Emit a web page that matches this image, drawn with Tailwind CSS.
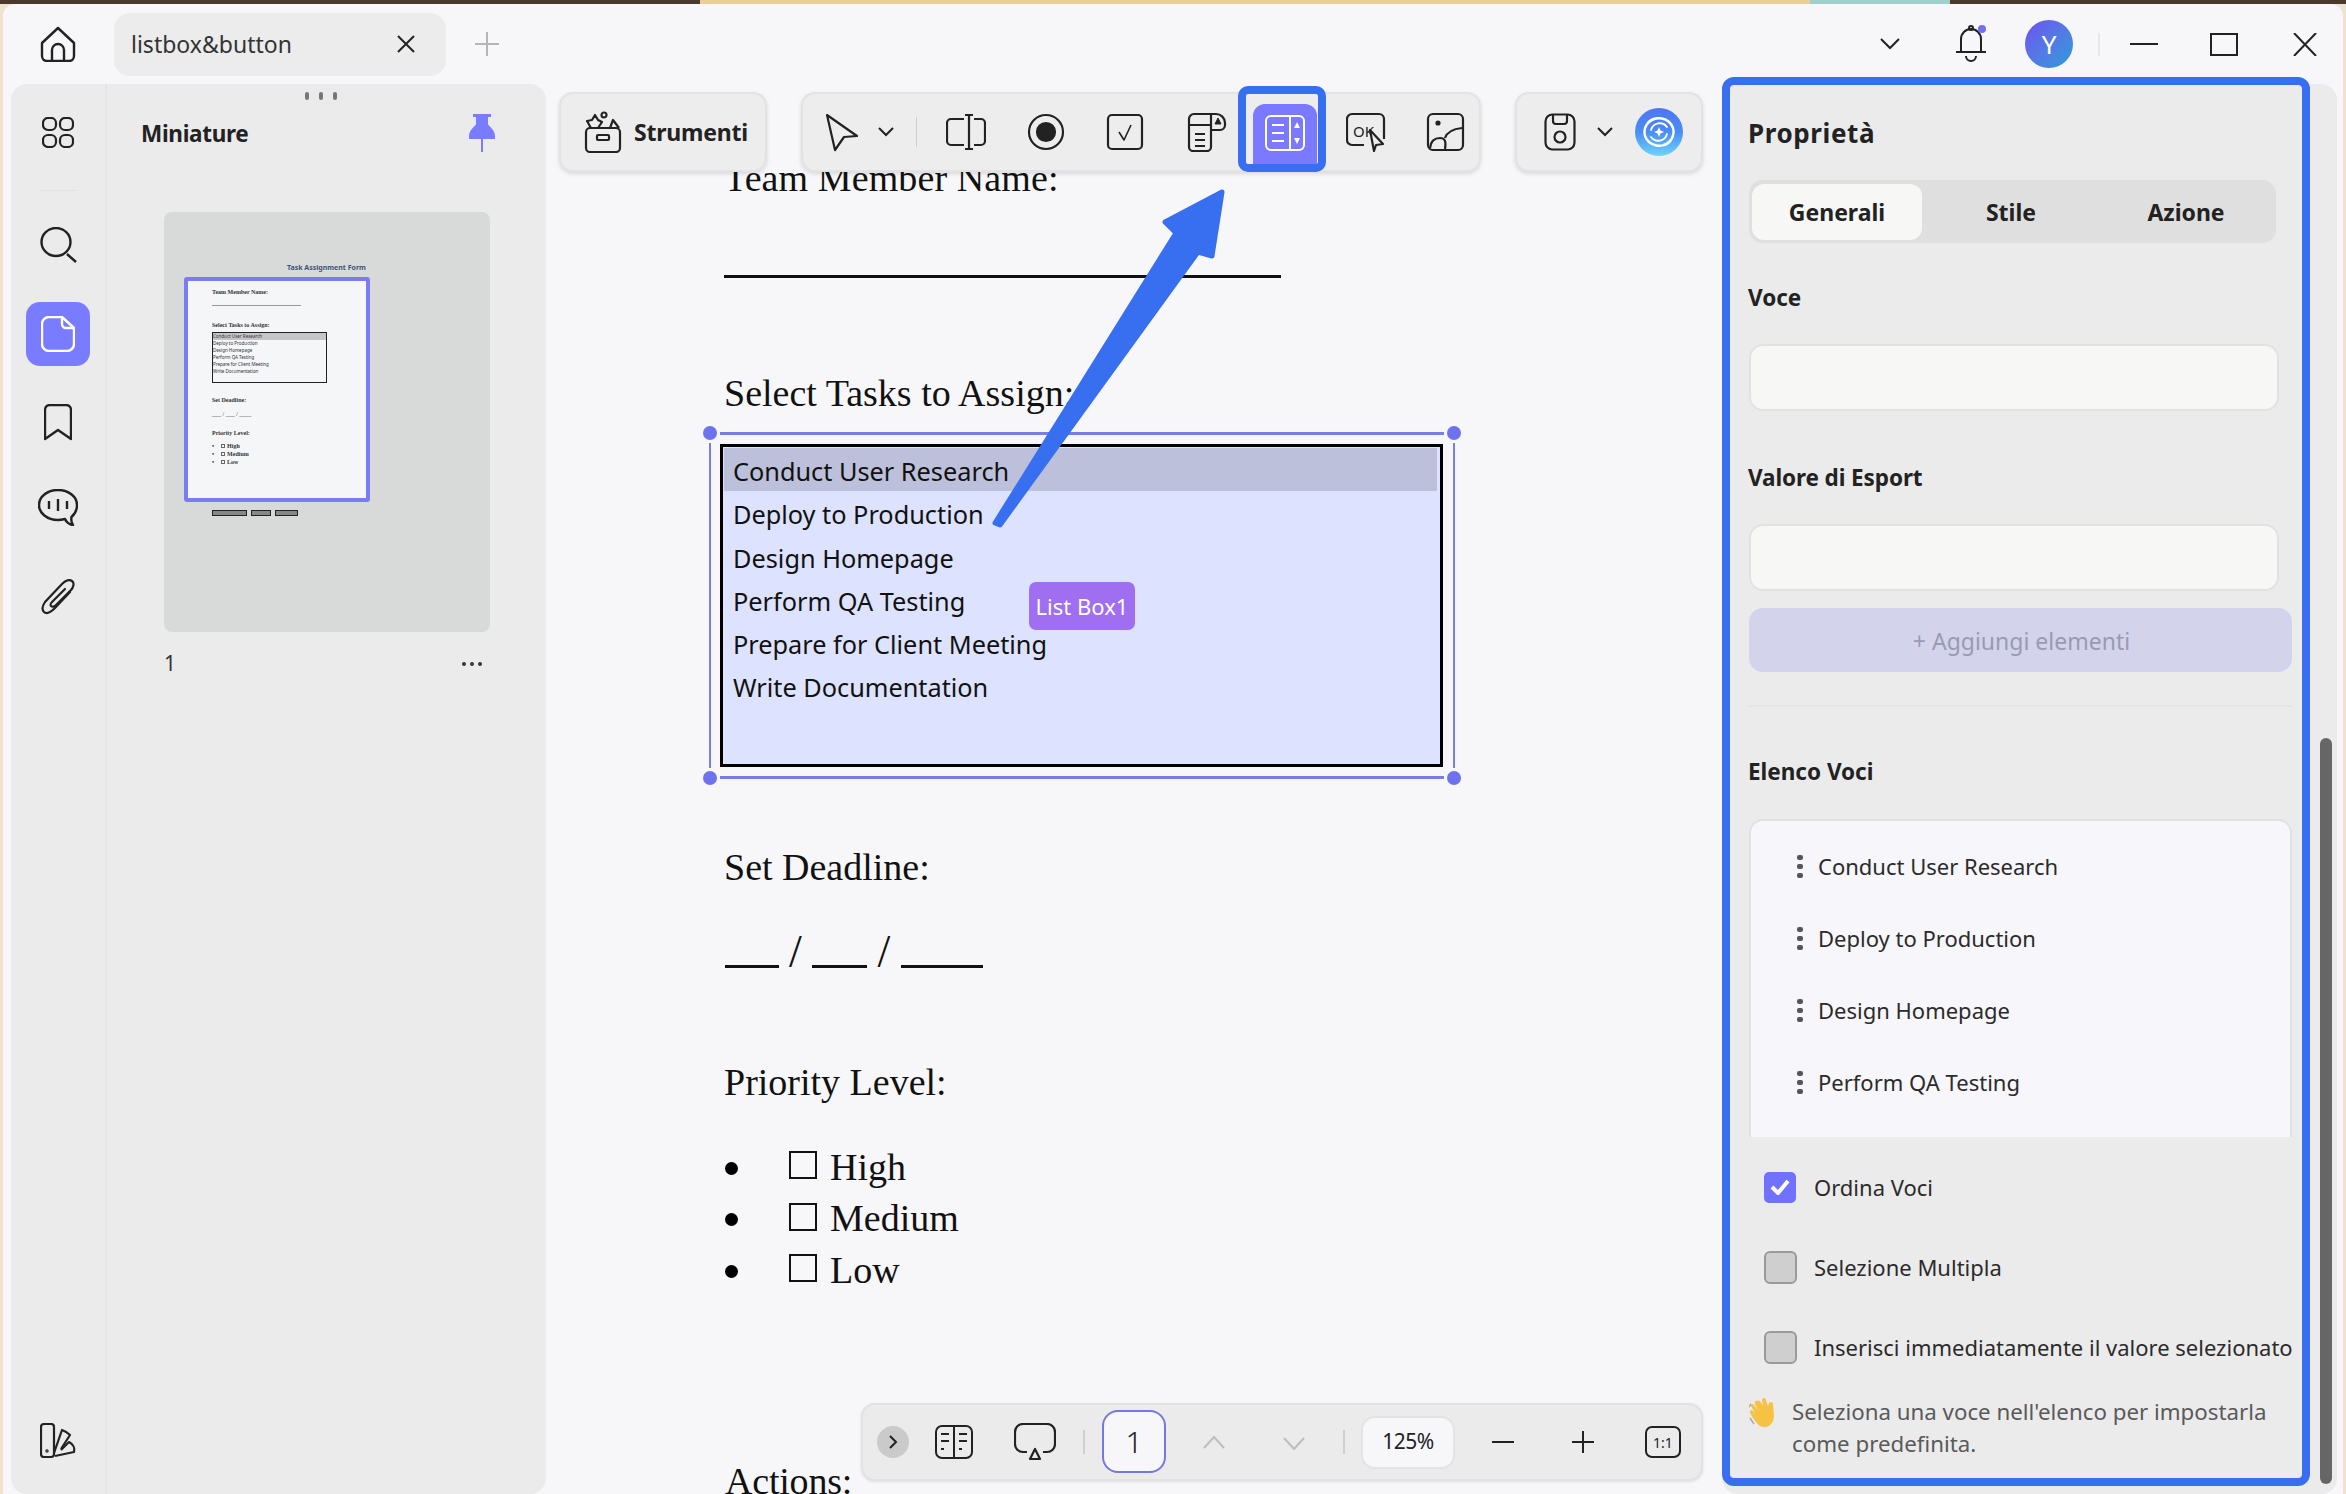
<!DOCTYPE html>
<html lang="it">
<head>
  <meta charset="UTF-8" />
  <title>listbox&amp;button</title>
  <script src="https://cdn.jsdelivr.net/npm/@tailwindcss/browser@4"></script>
</head>
<body class="bg-[#efe3d0] [font-family:'Noto_Sans',sans-serif] text-[#222]">
<div class="w-[2346px] h-[1494px] overflow-hidden flex flex-col">
  <!-- wallpaper strip -->
  <div class="h-[4px] flex shrink-0">
    <div class="w-[700px] bg-[#4a392d]"></div>
    <div class="w-[1110px] bg-[#e8cf98]"></div>
    <div class="w-[140px] bg-[#a0d0cc]"></div>
    <div class="flex-1 bg-[#4a392d]"></div>
  </div>

  <div class="ml-[3px] w-[2340px] h-[1490px] bg-[#f7f7f9] rounded-t-[12px] flex flex-col overflow-hidden">
    <!-- title bar -->
    <div class="h-[80px] shrink-0 flex items-center">
      <svg class="ml-[37px] w-[36px] h-[36px]" viewBox="0 0 36 36" fill="none" stroke="#222" stroke-width="2.4" stroke-linejoin="round"><path d="M2 17 18 2l16 15v13a5 5 0 0 1-5 5H7a5 5 0 0 1-5-5z"/><path d="M12 35V24a6 6 0 0 1 12 0v11"/></svg>
      <div class="ml-[38px] w-[332px] h-[63px] rounded-[16px] bg-[#ececed] flex items-center pl-[17px] pr-[31px] justify-between">
        <span class="text-[23px] text-[#333]">listbox&amp;button</span>
        <svg class="w-[18px] h-[18px]" viewBox="0 0 18 18" stroke="#222" stroke-width="2"><path d="M1 1l16 16M17 1 1 17"/></svg>
      </div>
      <svg class="ml-[29px] w-[24px] h-[24px]" viewBox="0 0 24 24" stroke="#b5b5b5" stroke-width="2"><path d="M12 0v24M0 12h24"/></svg>

      <svg class="ml-[1381px] w-[20px] h-[12px]" viewBox="0 0 20 12" fill="none" stroke="#222" stroke-width="2"><path d="M1 1l9 9 9-9"/></svg>
      <div class="ml-[56px] relative w-[30px] h-[38px]">
        <svg class="w-[30px] h-[38px]" viewBox="0 0 30 38" fill="none" stroke="#222" stroke-width="2"><path d="M5 26V14a10 10 0 0 1 20 0v12"/><path d="M0 27h30"/><path d="M10 31a5 5 0 0 0 10 0"/><circle cx="15" cy="3" r="2"/></svg>
        <div class="absolute -top-[0px] right-[0px] w-[8px] h-[8px] rounded-full bg-[#6f70f5]"></div>
      </div>
      <div class="ml-[39px] w-[48px] h-[48px] rounded-full bg-linear-to-br from-[#6a4ff0] to-[#1e9bd8] text-white text-[26px] flex items-center justify-center">Y</div>
      <div class="ml-[25px] w-[2px] h-[23px] bg-[#e8e8e8]"></div>
      <div class="ml-[30px] w-[28px] h-[2px] bg-[#222]"></div>
      <div class="ml-[52px] w-[28px] h-[23px] border-2 border-[#222]"></div>
      <svg class="ml-[55px] w-[24px] h-[23px]" viewBox="0 0 24 23" stroke="#222" stroke-width="2"><path d="M1 0l22 23M23 0 1 23"/></svg>
    </div>

    <!-- main -->
    <div class="flex-1 flex pl-[8px] min-h-0">
      <!-- left panel -->
      <div class="w-[535px] shrink-0 bg-[#ebebec] rounded-[16px] flex">
        <div class="w-[96px] border-r-2 border-[#e5e5e6] flex flex-col items-center pt-[33px] pb-[36px]">
          <svg class="w-[32px] h-[31px]" viewBox="0 0 32 31" fill="none" stroke="#222" stroke-width="2.2"><rect x="1" y="1" width="13" height="12" rx="5"/><rect x="18" y="1" width="13" height="12" rx="5"/><rect x="1" y="18" width="13" height="12" rx="5"/><rect x="18" y="18" width="13" height="12" rx="5"/></svg>
          <div class="mt-[42px] w-[36px] h-[1px] bg-[#e2e2e2]"></div>
          <svg class="mt-[36px] w-[37px] h-[36px]" viewBox="0 0 37 36" fill="none" stroke="#222" stroke-width="2.4"><ellipse cx="16" cy="15" rx="14.5" ry="14"/><path d="M27 27l9 8"/></svg>
          <div class="mt-[39px] w-[64px] h-[64px] rounded-[14px] bg-[#7a7cff] flex items-center justify-center">
            <svg class="w-[34px] h-[36px]" viewBox="0 0 34 36" fill="none" stroke="#fff" stroke-width="2.4" stroke-linejoin="round"><path d="M21 1H8a7 7 0 0 0-7 7v20a7 7 0 0 0 7 7h18a7 7 0 0 0 7-7V12z"/><path d="M21 1v7a4 4 0 0 0 4 4h8"/></svg>
          </div>
          <svg class="mt-[38px] w-[28px] h-[37px]" viewBox="0 0 28 37" fill="none" stroke="#222" stroke-width="2.4" stroke-linejoin="round"><path d="M1 6a5 5 0 0 1 5-5h16a5 5 0 0 1 5 5v29l-13-9-13 9z"/></svg>
          <svg class="mt-[48px] w-[40px] h-[37px]" viewBox="0 0 40 37" fill="none" stroke="#222" stroke-width="2.4" stroke-linejoin="round"><path d="M20 1C9 1 1 8 1 16s8 15 19 15c3 0 5-.5 7-1 1 3 5 6 8 6-1.500-2-2-5-1.500-8C37 25 39 21 39 16 39 8 31 1 20 1z"/><path d="M11 12v8M20 10v12M29 12v8"/></svg>
          <svg class="mt-[53px] w-[34px] h-[37px]" viewBox="0 0 34 37" fill="none" stroke="#222" stroke-width="2.2" stroke-linecap="round"><path d="M29 13 14 29c-3 3-8 7-11 4s-1-7 1-10L21 5c3-3 7-5 10-3s1 7-1 9L15 26c-2 2-4 2-5 1s0-3 1-4L24 10"/></svg>
          <svg class="mt-auto w-[36px] h-[35px]" viewBox="0 0 36 35" fill="none" stroke="#222" stroke-width="2.2" stroke-linejoin="round"><rect x="1" y="1" width="13" height="33" rx="3"/><path d="M14 30 22 7c3 1 6 3 8 5l-9 14"/><path d="M15 33l19-4c1-4-1-8-5-10l-8 8"/><circle cx="7" cy="28" r=".6"/></svg>
        </div>
        <div class="flex-1 relative pl-[34px] pr-[43px]">
          <div class="absolute left-[198px] top-[8px] flex gap-[10px]">
            <div class="w-[4px] h-[8px] rounded-full bg-[#777]"></div>
            <div class="w-[4px] h-[8px] rounded-full bg-[#777]"></div>
            <div class="w-[4px] h-[8px] rounded-full bg-[#777]"></div>
          </div>
          <div class="h-[42px] mt-[28px] flex items-center justify-between">
            <span class="text-[22.500px] font-bold text-[#222] tracking-[-0.3px] pt-[2px]">Miniature</span>
            <svg class="w-[26px] h-[38px] mr-[8px]" viewBox="0 0 26 38" fill="#7a7cff"><path d="M4 0h18v3h-3v7c0 2 7 5 7 12v3H14v13h-2V25H0v-3c0-7 7-10 7-12V3H4z"/></svg>
          </div>
          <!-- thumbnail -->
          <div class="mt-[58px] ml-[23px] w-[326px] h-[420px] bg-[#d8d9d9] rounded-[8px] pl-[20px] overflow-hidden text-[6px] text-[#333] [font-family:'Liberation_Serif',serif]">
            <div class="mt-[49px] h-[14px] leading-[14px] pl-[103px] text-[7px] font-bold text-[#3b5578] [font-family:'Noto_Sans',sans-serif] whitespace-nowrap">Task Assignment Form</div>
            <div class="mt-[2px] w-[186px] h-[225px] border-[4px] border-[#7a7cf5] rounded-[3px] bg-[#f4f6f8] pl-[24px] pt-[7px] font-bold leading-[8px]">
              <div>Team Member Name:</div>
              <div class="mt-[9px] w-[89px] h-[1px] bg-[#999]"></div>
              <div class="mt-[15px]">Select Tasks to Assign:</div>
              <div class="mt-[3px] w-[115px] h-[51px] border border-[#222] font-normal text-[4.500px] leading-[7px] [font-family:'Noto_Sans',sans-serif]">
                <div class="bg-[#c6c6c8]">Conduct User Research</div>
                <div>Deploy to Production</div>
                <div>Design Homepage</div>
                <div>Perform QA Testing</div>
                <div>Prepare for Client Meeting</div>
                <div>Write Documentation</div>
              </div>
              <div class="mt-[13px]">Set Deadline:</div>
              <div class="mt-[6px] font-normal">___ / ___ / ____</div>
              <div class="mt-[11px]">Priority Level:</div>
              <div class="mt-[5px] flex items-center h-[8px]"><span>•</span><span class="ml-[7px] w-[4px] h-[4px] border border-[#666]"></span><span class="ml-[2px]">High</span></div>
              <div class="flex items-center h-[8px]"><span>•</span><span class="ml-[7px] w-[4px] h-[4px] border border-[#666]"></span><span class="ml-[2px]">Medium</span></div>
              <div class="flex items-center h-[8px]"><span>•</span><span class="ml-[7px] w-[4px] h-[4px] border border-[#666]"></span><span class="ml-[2px]">Low</span></div>
            </div>
            <div class="mt-[8px] ml-[28px] flex gap-[4px]">
              <div class="w-[35px] h-[6px] bg-[#888] border border-[#222]"></div>
              <div class="w-[20px] h-[6px] bg-[#888] border border-[#222]"></div>
              <div class="w-[23px] h-[6px] bg-[#888] border border-[#222]"></div>
            </div>
          </div>
          <div class="ml-[23px] w-[326px] mt-[17px] h-[30px] flex items-center justify-between">
            <span class="text-[21px] text-[#333]">1</span>
            <div class="flex gap-[4px] mr-[8px]"><div class="w-[4px] h-[4px] rounded-full bg-[#333]"></div><div class="w-[4px] h-[4px] rounded-full bg-[#333]"></div><div class="w-[4px] h-[4px] rounded-full bg-[#333]"></div></div>
          </div>
        </div>
      </div>

      <!-- canvas -->
      <div class="w-[1176px] shrink-0 relative overflow-hidden">
        <div class="pl-[178px] pt-[69px] [font-family:'Liberation_Serif',serif] text-[38px] leading-[50px] text-[#111]">
          <div class="h-[50px] tracking-[0.1px]">Team Member Name:</div>
          <div class="mt-[72px] h-[3px] w-[557px] bg-[#111]"></div>
          <div class="mt-[90px] h-[50px]">Select Tasks to Assign:</div>
          <!-- listbox with selection frame -->
          <div class="mt-[15px] -ml-[14px] w-[744px] h-[345px] relative">
            <div class="absolute left-[10px] right-[10px] top-[-1px] h-[3px] bg-[#7a7ee0]"></div>
            <div class="absolute left-[10px] right-[10px] bottom-[-1px] h-[3px] bg-[#7a7ee0]"></div>
            <div class="absolute top-[10px] bottom-[10px] left-[-1px] w-[2px] bg-[#7a7ee0]"></div>
            <div class="absolute top-[10px] bottom-[10px] right-[-1px] w-[2px] bg-[#7a7ee0]"></div>
            <div class="absolute -left-[7px] -top-[7px] w-[14px] h-[14px] rounded-full bg-[#6f72ef]"></div>
            <div class="absolute -right-[7px] -top-[7px] w-[14px] h-[14px] rounded-full bg-[#6f72ef]"></div>
            <div class="absolute -left-[7px] -bottom-[7px] w-[14px] h-[14px] rounded-full bg-[#6f72ef]"></div>
            <div class="absolute -right-[7px] -bottom-[7px] w-[14px] h-[14px] rounded-full bg-[#6f72ef]"></div>
            <div class="absolute left-[10px] top-[11px] w-[723px] h-[323px] border-[3px] border-black bg-[#dde3ff] [font-family:'Noto_Sans',sans-serif] text-[25.300px] leading-[46px] text-[#111] pt-[1px] pr-[2px]">
              <div class="h-[43.300px] bg-[#bdc0da] pl-[9px] mx-[1px]">Conduct User Research</div>
              <div class="h-[43.300px] pl-[10px]">Deploy to Production</div>
              <div class="h-[43.300px] pl-[10px]">Design Homepage</div>
              <div class="h-[43.300px] pl-[10px]">Perform QA Testing</div>
              <div class="h-[43.300px] pl-[10px]">Prepare for Client Meeting</div>
              <div class="h-[43.300px] pl-[10px]">Write Documentation</div>
            </div>
            <div class="absolute left-[319px] top-[149px] w-[106px] h-[48px] rounded-[7px] bg-[#a06ef0] text-white text-[22px] leading-[48px] text-center [font-family:'Noto_Sans',sans-serif]">List Box1</div>
          </div>
          <div class="mt-[64px] h-[50px]">Set Deadline:</div>
          <div class="mt-[26px] h-[50px] flex items-end">
            <span class="w-[54px] h-[3px] bg-[#111] ml-[1px]"></span>
            <span class="w-[33px] h-[50px] text-center text-[46px] translate-y-[9px]">/</span>
            <span class="w-[55px] h-[3px] bg-[#111]"></span>
            <span class="w-[34px] h-[50px] text-center text-[46px] translate-y-[9px]">/</span>
            <span class="w-[82px] h-[3px] bg-[#111]"></span>
          </div>
          <div class="mt-[89px] h-[50px]">Priority Level:</div>
          <div class="mt-[34px]">
            <div class="h-[51.500px] flex items-center"><span class="ml-[1px] w-[13px] h-[13px] rounded-full bg-black mt-[3px]"></span><span class="ml-[51px] w-[28px] h-[28px] border-2 border-[#111] -mt-[3px]"></span><span class="ml-[13px]">High</span></div>
            <div class="h-[51.500px] flex items-center"><span class="ml-[1px] w-[13px] h-[13px] rounded-full bg-black mt-[3px]"></span><span class="ml-[51px] w-[28px] h-[28px] border-2 border-[#111] -mt-[3px]"></span><span class="ml-[13px]">Medium</span></div>
            <div class="h-[51.500px] flex items-center"><span class="ml-[1px] w-[13px] h-[13px] rounded-full bg-black mt-[3px]"></span><span class="ml-[51px] w-[28px] h-[28px] border-2 border-[#111] -mt-[3px]"></span><span class="ml-[13px]">Low</span></div>
          </div>
          <div class="mt-[160px] h-[50px] pl-[1px] tracking-[-0.2px]">Actions:</div>
        </div>

        <!-- floating top toolbars -->
        <div class="absolute left-[13px] top-[8px] flex">
          <div class="w-[208px] h-[80px] rounded-[14px] bg-[#ededee] border-2 border-[#e3e3e4] shadow-[0_2px_4px_rgba(0,0,0,0.12)] flex items-center pl-[23px]">
            <svg class="w-[38px] h-[42px]" viewBox="0 0 38 42" fill="none" stroke="#222" stroke-width="2.2" stroke-linejoin="round"><rect x="2" y="17" width="34" height="24" rx="4"/><rect x="13" y="24" width="12" height="5" rx="1"/><path d="M7 17 3 10l5-1 3-5 3 5 4 2-4 6"/><circle cx="20" cy="4" r="2.500"/><path d="M26 17l3-8 6 8"/></svg>
            <span class="ml-[12px] text-[23px] font-bold tracking-[-0.2px]">Strumenti</span>
          </div>
          <div class="ml-[34px] w-[680px] h-[80px] rounded-[14px] bg-[#ededee] border-2 border-[#e3e3e4] shadow-[0_2px_4px_rgba(0,0,0,0.12)] flex items-center pl-[18px] relative">
            <svg class="w-[40px] h-[40px]" viewBox="0 0 40 40" fill="none" stroke="#222" stroke-width="2.2" stroke-linejoin="round"><path d="M6 3l30 21-13 1-9 13z"/></svg>
            <svg class="ml-[17px] w-[16px] h-[10px]" viewBox="0 0 16 10" fill="none" stroke="#222" stroke-width="2"><path d="M1 1l7 7 7-7"/></svg>
            <div class="ml-[22px] w-[1px] h-[30px] bg-[#cfcfcf]"></div>
            <svg class="ml-[29px] w-[40px] h-[40px]" viewBox="0 0 40 40" fill="none" stroke="#222" stroke-width="2.2" stroke-linejoin="round"><path d="M18 7H5a4 4 0 0 0-4 4v18a4 4 0 0 0 4 4h13M28 7h7a4 4 0 0 1 4 4v18a4 4 0 0 1-4 4h-7"/><path d="M19 3h8M23 3v34M19 37h8"/></svg>
            <svg class="ml-[40px] w-[40px] h-[40px]" viewBox="0 0 40 40" fill="none" stroke="#222" stroke-width="2.2"><circle cx="20" cy="20" r="17"/><circle cx="20" cy="20" r="9" fill="#222"/></svg>
            <svg class="ml-[39px] w-[40px] h-[40px]" viewBox="0 0 40 40" fill="none" stroke="#222" stroke-width="2.2" stroke-linejoin="round"><rect x="3" y="3" width="34" height="34" rx="4"/><path d="M14 20l5 8 7-15" stroke-width="1.600"/></svg>
            <svg class="ml-[42px] w-[40px] h-[40px]" viewBox="0 0 40 40" fill="none" stroke="#222" stroke-width="2.200" stroke-linejoin="round"><path d="M2 13V7a5 5 0 0 1 5-5h22a9 9 0 0 1 9 9v2a5 5 0 0 1-5 5h-9"/><path d="M2 13h22M2 13v22a4 4 0 0 0 4 4h14a4 4 0 0 0 4-4V2"/><path d="M8 22h10M8 28h10M8 34h10"/><path d="M31 6l3 6h-6z" fill="#222" stroke-width="1"/></svg>
            <div class="ml-[26px] w-[64px] h-[68px] mt-[12px] rounded-t-[12px] bg-[#7a79ff] flex items-start justify-center pt-[11px]">
              <svg class="w-[40px] h-[36px]" viewBox="0 0 40 36" fill="none" stroke="#fff" stroke-width="2"><rect x="1" y="1" width="38" height="34" rx="5"/><path d="M25 1v34M7 10h12M7 18h12M7 26h12"/><path d="M32 7l3 6h-6zM32 29l-3-6h6z" fill="#fff" stroke="none"/></svg>
            </div>
            <svg class="ml-[29px] w-[40px] h-[40px]" viewBox="0 0 40 40" fill="none" stroke="#222" stroke-width="2.200" stroke-linejoin="round"><path d="M18 33H6a5 5 0 0 1-5-5V7a5 5 0 0 1 5-5h27a5 5 0 0 1 5 5v20"/><text x="7" y="25" font-size="15" fill="#222" stroke="none" font-family="Noto Sans">OK</text><path d="M24 18l13 14-7 1-2 6z" fill="#ededee"/></svg>
            <svg class="ml-[39px] w-[40px] h-[40px]" viewBox="0 0 40 40" fill="none" stroke="#222" stroke-width="2.200" stroke-linejoin="round"><rect x="3" y="2" width="35" height="36" rx="5"/><circle cx="13" cy="11" r="1.500" fill="#222"/><path d="M5 36c1-8 6-10 10-10 6 0 6 5 5 11M20 26c2-6 7-9 17-10"/></svg>
            <!-- annotation around list box button -->
            <div class="absolute left-[435px] -top-[8px] w-[88px] h-[86px] border-[8px] border-[#386ff0] rounded-[10px]"></div>
          </div>
          <div class="ml-[34px] w-[188px] h-[80px] rounded-[14px] bg-[#ededee] border-2 border-[#e3e3e4] shadow-[0_2px_4px_rgba(0,0,0,0.12)] flex items-center pl-[27px]">
            <svg class="w-[32px] h-[38px]" viewBox="0 0 32 38" fill="none" stroke="#222" stroke-width="2.200" stroke-linejoin="round"><rect x="1.500" y="1.500" width="29" height="35" rx="7"/><path d="M9 2v6a3 3 0 0 0 3 3h8a3 3 0 0 0 3-3V2"/><circle cx="16" cy="24" r="5.500"/></svg>
            <svg class="ml-[21px] w-[16px] h-[10px]" viewBox="0 0 16 10" fill="none" stroke="#222" stroke-width="2"><path d="M1 1l7 7 7-7"/></svg>
            <div class="ml-[22px] w-[48px] h-[48px] rounded-full bg-linear-to-b from-[#4f74f2] via-[#4a8df5] to-[#6fd4fa] flex items-center justify-center">
              <svg class="w-[40px] h-[40px]" viewBox="0 0 40 40" fill="none" stroke="#fff" stroke-width="2.400" stroke-linecap="round"><path d="M9 11a15 15 0 0 1 25 5c2 7-2 15-9 17"/><path d="M31 29A15 15 0 0 1 6 24c-2-7 2-15 9-17"/><path d="M12 18a9 9 0 0 1 16-3M28 22a9 9 0 0 1-16 3" stroke-width="1.800"/><path d="M20 15l1.500 3.500L25 20l-3.500 1.500L20 25l-1.500-3.500L15 20l3.500-1.500z" fill="#fff" stroke="none"/></svg>
            </div>
          </div>
        </div>

        <!-- bottom toolbar -->
        <div class="absolute left-[315px] top-[1319px] w-[842px] h-[78px] rounded-[14px] bg-[#ebebec] border-2 border-[#e2e2e3] shadow-[0_1px_3px_rgba(0,0,0,0.1)] flex items-center text-[#222]">
          <div class="ml-[14px] w-[32px] h-[32px] rounded-full bg-[#cacaca] flex items-center justify-center">
            <svg class="w-[10px] h-[14px]" viewBox="0 0 10 14" fill="none" stroke="#222" stroke-width="2"><path d="M2 1l6 6-6 6"/></svg>
          </div>
          <svg class="ml-[26px] w-[38px] h-[34px]" viewBox="0 0 38 34" fill="none" stroke="#222" stroke-width="2"><rect x="1" y="1" width="36" height="32" rx="6"/><path d="M19 1v32"/><path d="M6 9h8M6 16h8M6 24h3M24 9h8M24 16h8M24 24h3"/></svg>
          <svg class="ml-[41px] w-[42px] h-[38px]" viewBox="0 0 42 38" fill="none" stroke="#222" stroke-width="2.200" stroke-linejoin="round"><path d="M13 29H9a8 8 0 0 1-8-8V9a8 8 0 0 1 8-8h24a8 8 0 0 1 8 8v12a8 8 0 0 1-8 8h-4"/><path d="M21 26l5 10H16z"/></svg>
          <div class="ml-[27px] w-[2px] h-[24px] bg-[#cfcfcf]"></div>
          <div class="ml-[17px] w-[64px] h-[63px] -mt-[2px] rounded-[16px] border-2 border-[#7478e0] bg-[#f7f7f9] text-[30px] font-light flex items-center justify-center">1</div>
          <svg class="ml-[37px] w-[22px] h-[14px]" viewBox="0 0 22 14" fill="none" stroke="#bdbdbd" stroke-width="2"><path d="M1 13 11 2l10 11"/></svg>
          <svg class="ml-[58px] w-[22px] h-[14px] mt-[3px]" viewBox="0 0 22 14" fill="none" stroke="#bdbdbd" stroke-width="2"><path d="M1 1l10 11L21 1"/></svg>
          <div class="ml-[38px] w-[2px] h-[24px] bg-[#cfcfcf]"></div>
          <div class="ml-[16px] w-[94px] h-[53px] rounded-[14px] border-2 border-[#e3e3e3] bg-[#f7f7f9] text-[21px] flex items-center justify-center tracking-[-0.5px]">125%</div>
          <div class="ml-[37px] w-[22px] h-[2px] bg-[#222]"></div>
          <svg class="ml-[58px] w-[22px] h-[22px]" viewBox="0 0 22 22" stroke="#222" stroke-width="2"><path d="M11 0v22M0 11h22"/></svg>
          <div class="ml-[51px] w-[36px] h-[32px] rounded-[7px] border-2 border-[#222] text-[14px] flex items-center justify-center">1:1</div>
        </div>

        <!-- arrow annotation -->
        <svg class="absolute left-0 top-0 w-[1176px] h-[460px]" viewBox="546 84 1176 460" fill="#386ff0" stroke="#386ff0" stroke-width="5" stroke-linejoin="round"><path d="M995 523 1176 233 1165 222 1222 192 1212 256 1198 252 1000 525z"/></svg>
      </div>

      <!-- right panel -->
      <div class="w-[615px] shrink-0 bg-[#ebebec] rounded-[16px] relative pl-[27px]">
        <div class="mt-[29px] h-[40px] leading-[40px] text-[26px] font-bold tracking-[0.6px] -ml-[1px]">Proprietà</div>
        <div class="mt-[27px] w-[527px] h-[63px] rounded-[14px] bg-[#dfdfdf] flex items-center pl-[3px] text-[23px] font-bold">
          <div class="w-[170px] h-[56px] rounded-[12px] bg-[#f7f7f6] flex items-center justify-center pt-[2px]">Generali</div>
          <div class="w-[178px] text-center pt-[2px]">Stile</div>
          <div class="w-[172px] text-center pt-[2px]">Azione</div>
        </div>
        <div class="mt-[35px] h-[40px] leading-[40px] text-[22.500px] font-bold -ml-[1px]">Voce</div>
        <div class="mt-[26px] w-[530px] h-[67px] rounded-[14px] bg-[#f7f7f6] border-2 border-[#e2e2e1]"></div>
        <div class="mt-[47px] h-[40px] leading-[40px] text-[22.500px] font-bold -ml-[1px] tracking-[-0.1px]">Valore di Esport</div>
        <div class="mt-[26px] w-[530px] h-[67px] rounded-[14px] bg-[#f7f7f6] border-2 border-[#e2e2e1]"></div>
        <div class="mt-[17px] w-[543px] h-[64px] rounded-[14px] bg-[#d3d3ec] text-[#9a9ab2] text-[23px] flex items-center justify-center pt-[2px] pl-[2px]">+ Aggiungi elementi</div>
        <div class="mt-[33px] w-[543px] h-[2px] bg-[#e5e5e6]"></div>
        <div class="mt-[45px] h-[40px] leading-[40px] text-[22.500px] font-bold -ml-[1px]">Elenco Voci</div>
        <div class="mt-[27px] w-[543px] h-[318px] rounded-t-[14px] bg-[#f7f6fa] border-2 border-b-0 border-[#e2e2e3] pt-[9px] text-[22px] text-[#2b2b2b]">
          <div class="h-[72px] flex items-center pl-[46px]"><div class="flex flex-col gap-[4px] w-[6px]"><i class="block w-[6px] h-[5px] rounded-[2px] bg-[#555]"></i><i class="block w-[6px] h-[5px] rounded-[2px] bg-[#555]"></i><i class="block w-[6px] h-[5px] rounded-[2px] bg-[#555]"></i></div><span class="ml-[15px]">Conduct User Research</span></div>
          <div class="h-[72px] flex items-center pl-[46px]"><div class="flex flex-col gap-[4px] w-[6px]"><i class="block w-[6px] h-[5px] rounded-[2px] bg-[#555]"></i><i class="block w-[6px] h-[5px] rounded-[2px] bg-[#555]"></i><i class="block w-[6px] h-[5px] rounded-[2px] bg-[#555]"></i></div><span class="ml-[15px]">Deploy to Production</span></div>
          <div class="h-[72px] flex items-center pl-[46px]"><div class="flex flex-col gap-[4px] w-[6px]"><i class="block w-[6px] h-[5px] rounded-[2px] bg-[#555]"></i><i class="block w-[6px] h-[5px] rounded-[2px] bg-[#555]"></i><i class="block w-[6px] h-[5px] rounded-[2px] bg-[#555]"></i></div><span class="ml-[15px]">Design Homepage</span></div>
          <div class="h-[72px] flex items-center pl-[46px]"><div class="flex flex-col gap-[4px] w-[6px]"><i class="block w-[6px] h-[5px] rounded-[2px] bg-[#555]"></i><i class="block w-[6px] h-[5px] rounded-[2px] bg-[#555]"></i><i class="block w-[6px] h-[5px] rounded-[2px] bg-[#555]"></i></div><span class="ml-[15px]">Perform QA Testing</span></div>
        </div>
        <div class="mt-[10px] text-[22px] text-[#2b2b2b]">
          <div class="h-[80px] flex items-center pl-[15px]">
            <div class="w-[32px] h-[31px] rounded-[5px] bg-[#7071ff] flex items-center justify-center"><svg class="w-[20px] h-[16px]" viewBox="0 0 20 16" fill="none" stroke="#fff" stroke-width="4"><path d="M2 8l6 6L18 2"/></svg></div>
            <span class="ml-[18px]">Ordina Voci</span>
          </div>
          <div class="h-[80px] flex items-center pl-[15px]">
            <div class="w-[33px] h-[33px] rounded-[6px] bg-[#cfcfcf] border-2 border-[#9a9a9a]"></div>
            <span class="ml-[17px]">Selezione Multipla</span>
          </div>
          <div class="h-[80px] flex items-center pl-[15px]">
            <div class="w-[33px] h-[33px] rounded-[6px] bg-[#cfcfcf] border-2 border-[#9a9a9a]"></div>
            <span class="ml-[17px] whitespace-nowrap">Inserisci immediatamente il valore selezionato</span>
          </div>
        </div>
        <div class="mt-[9px] flex text-[22.300px] leading-[32px] text-[#5a5a5a]">
          <svg class="w-[28px] h-[34px] shrink-0" viewBox="0 0 28 34" fill="#f6c244"><path d="M9 5c2-1 3 1 5 5l-1-6c0-2 3-3 4 0l2 6 1-3c1-2 4-1 4 1l1 12c0 7-5 12-11 11-5-1-7-5-10-9l-3-5c-1-2 1-4 3-2l3 4-5-9c-1-2 2-3 3-1l4 6-3-7c-1-2 1-4 3-3z"/><path d="M1 22l4 6M2 8 0 11" stroke="#aaa" stroke-width="1.500" fill="none"/></svg>
          <span class="ml-[15px] w-[490px]">Seleziona una voce nell'elenco per impostarla come predefinita.</span>
        </div>
        <!-- annotation frame and scrollbar -->
        <div class="absolute left-0 -top-[7px] w-[588px] h-[1409px] border-[8px] border-[#386ff0] rounded-[12px] pointer-events-none"></div>
        <div class="absolute left-[598px] top-[654px] w-[12px] h-[746px] rounded-full bg-[#666]"></div>
      </div>
    </div>
  </div>
</div>
</body>
</html>
